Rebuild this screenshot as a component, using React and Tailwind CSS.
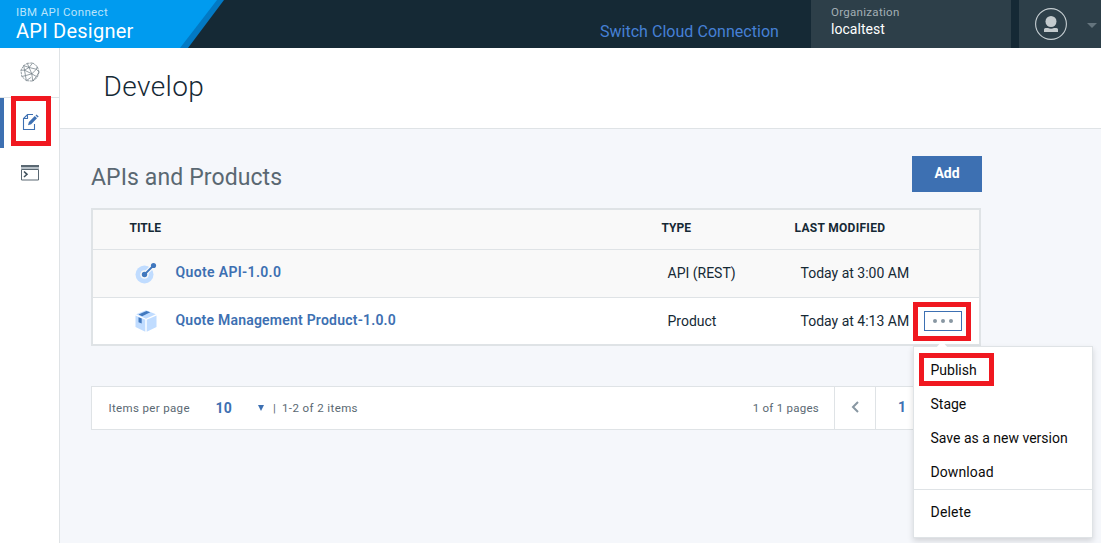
import React from "react";

function MeshIcon() {
  return (
    <svg className="-mt-0.5" width="20" height="20" viewBox="0 0 22 22" fill="none" stroke="#66737c" strokeWidth="0.75">
      <path d="M8 1.500L14 1l5 4 2 6-2 6-5 4-7-.5-5-4.500L1 9l3-5z" strokeDasharray="2.500 .7" />
      <path d="M4 4l6 2 4-5M10 6L5 9 1 9M5 9l1 6-4 1M6 15l7-2-3-7 8 2 1-3M18 8l-5 5 5 3 3-5zM18 16l-4 5-1-8M6 15l1 5.500 5-3.500M5 9l8 4M8 1.500l2 4.500M4 4l1 5" />
    </svg>
  );
}

function EditIcon() {
  return (
    <svg className="-mt-0.5" width="18" height="18" viewBox="0 0 18 18" fill="none">
      <path d="M11 1.5H5.5L1.5 5.500v11h11V11M5.500 1.500v4h-4" stroke="#3d70b2" strokeWidth="1.1" />
      <path d="M6 12.300l.9-3.300L12.800 3.100l2.200 2.200-5.800 5.900zM13.500 2.400L14.500 1.400l2.200 2.200-1 1z" fill="#3d70b2" />
    </svg>
  );
}

function ConsoleIcon() {
  return (
    <svg width="18" height="16" viewBox="0 0 18 16" fill="none">
      <path d="M0 0h18v2H0z" fill="#5a6872" />
      <path d="M0 2h18v2H0z" fill="#b8c1c8" />
      <path d="M.5 4.500h17v10.500H.5z" stroke="#5a6872" />
      <path d="M3 6.500L6 9.300 3 12" stroke="#42535e" strokeWidth="1.6" />
    </svg>
  );
}

function ApiIcon() {
  return (
    <svg className="-mt-0.5 -ml-px" width="22" height="22" viewBox="0 0 22 22">
      <circle cx="9.500" cy="12.500" r="9" fill="#c0dcff" />
      <circle cx="9.500" cy="12.500" r="4.300" fill="#f9f9f9" />
      <path d="M9.500 12.500L18.500 3.500" stroke="#f9f9f9" strokeWidth="4.500" />
      <path d="M9.500 12.500L18.500 3.500" stroke="#4178be" strokeWidth="1.800" />
      <circle cx="9.500" cy="12.500" r="2.700" fill="#4178be" />
      <circle cx="18.500" cy="3.500" r="2.600" fill="#4178be" />
    </svg>
  );
}

function ProductIcon() {
  return (
    <svg className="-ml-px" width="22" height="22" viewBox="0 0 22 22">
      <path d="M.5 5.500L10.300 9.800v12L.5 17z" fill="#c0dcff" />
      <path d="M21.500 5.500L11.700 9.800v12l9.800-4.800z" fill="#c0dcff" />
      <path d="M11 .3l9.800 4L11 8.800 1.200 4.300z" fill="#c0dcff" />
      <path d="M3.500 4.600L11.500.9l3.800 1.400-8.200 4z" fill="#4178be" />
      <path d="M3.500 7.200L6.700 8.600v5L3.500 12.200z" fill="#4178be" />
    </svg>
  );
}

function Header() {
  return (
    <header className="flex h-12 bg-[#152935]">
      <div className="relative h-12 w-56 shrink-0">
        <svg className="absolute inset-0" width="224" height="48" viewBox="0 0 224 48">
          <path d="M0 0H224L188 48H0z" fill="#0279c4" />
          <path d="M0 0H217L180 48H0z" fill="#009bef" />
        </svg>
        <div className="relative flex flex-col pl-4 whitespace-nowrap">
          <span className="mt-1 text-[11.5px] leading-4 tracking-[0.37px] text-[#b9e4fb]">IBM API Connect</span>
          <span className="text-[20px] leading-[22px] tracking-[0.25px] text-white">API Designer</span>
        </div>
      </div>
      <div className="flex flex-1 justify-end pt-[21px] pr-8">
        <a className="text-[16px] leading-[21px] tracking-[0.04px] whitespace-nowrap text-[#4680d6]">Switch Cloud Connection</a>
      </div>
      <div className="flex w-[200px] shrink-0 flex-col bg-[#2d3f49] pl-5">
        <span className="mt-1 text-[11.5px] leading-4 tracking-[0.3px] text-[#a4afb5]">Organization</span>
        <span className="text-[14px] leading-[18px] tracking-[0.05px] text-white">localtest</span>
      </div>
      <div className="ml-2 flex w-[82px] shrink-0 items-center bg-[#2d3f49] pl-4">
        <svg width="32" height="32" viewBox="0 0 32 32">
          <circle cx="16" cy="16" r="15.400" fill="none" stroke="#c6ced2" strokeWidth="1.100" />
          <circle cx="16" cy="13.500" r="5.500" fill="#c3cacd" />
          <path d="M9 24v-2.500q0-1.500 1.500-1.500H13q3 1.500 6 0h2.500q1.500 0 1.500 1.500V24z" fill="#c3cacd" />
        </svg>
        <svg className="ml-5 mt-[3px]" width="10" height="5" viewBox="0 0 10 5">
          <path d="M0 0h10L5 5z" fill="#64747d" />
        </svg>
      </div>
    </header>
  );
}

function Sidebar() {
  return (
    <nav className="flex w-[60px] shrink-0 flex-col border-r border-[#dfe3e6] bg-white">
      <div className="flex h-[50px] items-center justify-center border-b border-[#dfe3e6]">
        <MeshIcon />
      </div>
      <div className="relative flex h-[50px] items-center border-l-4 border-[#3d70b2] pl-[18px]">
        <EditIcon />
        <div className="absolute -top-0.5 left-[7px] h-[50px] w-10 border-5 border-[#f01820]" />
      </div>
      <div className="flex h-[50px] items-center pl-[21px]">
        <ConsoleIcon />
      </div>
    </nav>
  );
}

function Menu() {
  return (
    <div className="absolute top-[44px] left-0 z-10 h-[192px] w-[180px] border border-[#dfe3e6] bg-white pt-1.5 text-[14px] whitespace-nowrap text-[#0b0b0b] shadow-[0_3px_6px_rgba(0,0,0,0.14)]">
      <svg className="absolute -top-1.5 left-[22px]" width="12" height="7" viewBox="0 0 12 7">
        <path d="M6 0l6 7H0z" fill="#fff" />
      </svg>
      <div className="relative h-[34px] pl-[16.500px] leading-[34px]">
        Publish
        <div className="absolute top-0 left-[5px] h-[33px] w-[75px] border-5 border-[#f01820]" />
      </div>
      <div className="h-[34px] pl-[16.500px] leading-[34px]">Stage</div>
      <div className="h-[34px] pl-[16.500px] leading-[34px]">Save as a new version</div>
      <div className="h-[34px] pl-[16.500px] leading-[34px] tracking-[0.1px]">Download</div>
      <div className="border-t border-[#dfe3e6] pt-[5px] pl-[16.500px] leading-[34px] tracking-[0.2px]">Delete</div>
    </div>
  );
}

function Products() {
  return (
    <section className="mt-4 h-[138px] w-[890px] border-2 border-[#dfe3e6] text-[14px] whitespace-nowrap text-[#152935]">
      <div className="flex h-10 border-b border-[#dfe3e6] bg-[#f9f9f9] pt-2 pl-[36.500px] text-[12px] leading-5 font-bold">
        <div className="w-[532px]">TITLE</div>
        <div className="w-[133px]">TYPE</div>
        <div className="tracking-[0.3px]">LAST MODIFIED</div>
      </div>
      <div className="flex h-12 items-center border-b border-[#dfe3e6] bg-[#f9f9f9] pl-[42.500px]">
        <div className="flex w-[532px] items-center gap-[19px]">
          <ApiIcon />
          <a className="-mt-0.5 font-semibold tracking-[0.35px] text-[#3d70b2]">Quote API-1.0.0</a>
        </div>
        <div className="w-[133px]">API (REST)</div>
        <div>Today at 3:00 AM</div>
      </div>
      <div className="relative flex h-[46px] items-center bg-white pl-[42.500px]">
        <div className="flex w-[532px] items-center gap-[19px]">
          <ProductIcon />
          <a className="-mt-0.5 font-semibold tracking-[0.22px] text-[#3d70b2]">Quote Management Product-1.0.0</a>
        </div>
        <div className="w-[133px]">Product</div>
        <div>Today at 4:13 AM</div>
        <div className="absolute top-1 left-[820px] h-[39px] w-[58px] border-5 border-[#f01820] bg-white pt-1 pl-1.5">
          <button className="flex h-5 w-[38px] items-center justify-center gap-1 border border-[#3d70b2]">
            <span className="size-1 rounded-full bg-[#8897a2]" />
            <span className="size-1 rounded-full bg-[#8897a2]" />
            <span className="size-1 rounded-full bg-[#8897a2]" />
          </button>
        </div>
        <div className="absolute top-1 left-[820px]">
          <Menu />
        </div>
      </div>
    </section>
  );
}

function Pagination() {
  return (
    <div className="mt-10 flex h-11 w-[890px] items-center border border-[#dfe3e6] bg-white text-[11.5px] leading-5 whitespace-nowrap text-[#5a6872]">
      <span className="ml-[16.500px] w-[107px] tracking-[0.35px]">Items per page</span>
      <span className="-mt-px w-[42.500px] text-[14px] font-bold tracking-[0.3px] text-[#3d70b2]">10</span>
      <svg width="6" height="6" viewBox="0 0 6 6">
        <path d="M0 0h6L3 6z" fill="#3d70b2" />
      </svg>
      <span className="ml-[9px] w-[9px]">|</span>
      <span className="tracking-[0.4px]">1-2 of 2 items</span>
      <span className="mr-[15px] ml-auto tracking-[0.25px]">1 of 1 pages</span>
      <div className="flex h-full w-[42px] items-center justify-center border-x border-[#dfe3e6]">
        <svg className="-mt-0.5" width="8" height="12" viewBox="0 0 8 12" fill="none" stroke="#8897a2" strokeWidth="2">
          <path d="M7 1L2 6l5 5" />
        </svg>
      </div>
      <div className="-mt-0.5 w-[104px] pl-[22px] text-[14px] font-bold text-[#3d70b2]">1</div>
    </div>
  );
}

export default function App() {
  return (
    <div className="flex h-[543px] w-[1101px] flex-col overflow-hidden bg-[#f5f7fb] font-['Roboto','Liberation_Sans',sans-serif]">
      <Header />
      <div className="flex flex-1">
        <Sidebar />
        <main className="flex-1">
          <div className="h-[81px] border-b border-[#dfe3e6] bg-white pt-[21px] pl-[43.500px]">
            <h1 className="text-[28px] leading-9 font-light tracking-[0.4px] text-[#152935]">Develop</h1>
          </div>
          <div className="pt-[27px] pl-[31px]">
            <div className="flex h-9 w-[891px] justify-between">
              <h2 className="mt-[7px] text-[23px] leading-[30px] tracking-[0.1px] text-[#5a6872]">APIs and Products</h2>
              <button className="h-9 w-[70px] bg-[#3d70b2] pb-0.5 text-[14px] font-bold text-white">Add</button>
            </div>
            <Products />
            <Pagination />
          </div>
        </main>
      </div>
    </div>
  );
}
